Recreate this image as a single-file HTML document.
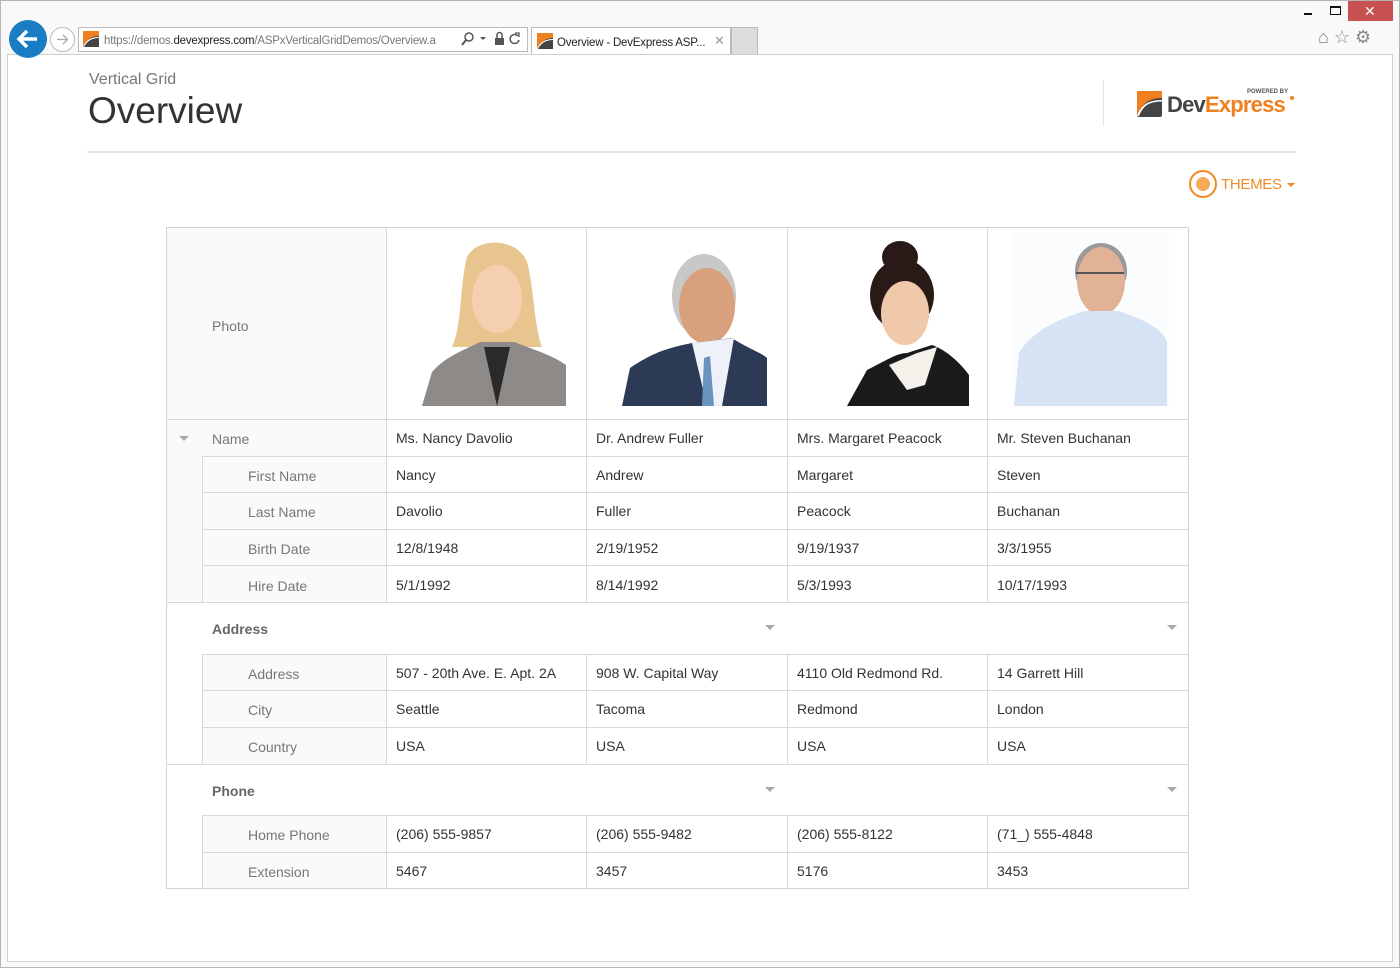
<!DOCTYPE html>
<html><head><meta charset="utf-8">
<style>
*{margin:0;padding:0;box-sizing:border-box}
body{width:1400px;height:968px;background:#fff;font-family:"Liberation Sans",sans-serif;position:relative;overflow:hidden}
.a{position:absolute}
.hl{position:absolute;height:1px;background:#d9d9d9}
.vl{position:absolute;width:1px;background:#d9d9d9}
.t{position:absolute;font-size:14px;color:#333;white-space:nowrap;line-height:16px}
.h{color:#777}
.b{font-weight:bold;color:#666}
.arr{position:absolute;width:0;height:0;border-left:6px solid transparent;border-right:6px solid transparent;border-top:6px solid #aaa}
</style></head><body>
<div class="a" style="left:0;top:0;width:1400px;height:968px;border:1px solid #b5b5b5;background:#f9f9f9"></div>
<div class="a" style="left:7px;top:54px;width:1386px;height:908px;background:#fff;border:1px solid #cfcfcf"></div>
<div class="a" style="left:9px;top:20px;width:38px;height:38px;border-radius:50%;background:#1a7dc4"></div>
<svg class="a" style="left:9px;top:20px" width="38" height="38"><path d="M28 19H11M18 11l-8 8 8 8" stroke="#fff" stroke-width="3.5" fill="none"/></svg>
<div class="a" style="left:50px;top:27px;width:25px;height:25px;border-radius:50%;border:1px solid #bbb;background:#fff"></div>
<svg class="a" style="left:50px;top:27px" width="25" height="25"><path d="M7 12.5h10M13 8l4.5 4.5L13 17" stroke="#aaa" stroke-width="1.3" fill="none"/></svg>
<div class="a" style="left:78px;top:27px;width:450px;height:25px;border:1px solid #bbb;background:#fff"></div>
<svg class="a" style="left:83px;top:31px" width="16" height="16"><rect width="16" height="16" fill="#444"/><path d="M0 0h16v5C9 5 4 8 0 16z" fill="#f07f1f"/><path d="M0 16C3 9 8 6 16 6v1C9 7 4 10 1 16z" fill="#fff"/></svg>
<div class="t" style="left:104px;top:33px;font-size:11.5px;color:#777;width:352px;overflow:hidden;letter-spacing:-0.2px">https://demos.<span style="color:#222">devexpress.com</span>/ASPxVerticalGridDemos/Overview.a</div>
<svg class="a" style="left:460px;top:31px" width="64" height="17"><circle cx="9" cy="6" r="4" stroke="#555" stroke-width="1.5" fill="none"/><path d="M6 9l-4 5" stroke="#555" stroke-width="2"/><path d="M20 6h6l-3 3z" fill="#555"/><rect x="35" y="7" width="9" height="7" fill="#555"/><path d="M37 7V4a2.5 2.5 0 0 1 5 0v3" stroke="#555" fill="none" stroke-width="1.5"/><path d="M58 5a4.5 4.5 0 1 0 1 4" stroke="#555" stroke-width="1.5" fill="none"/><path d="M55 2h4v4" stroke="#555" fill="none" stroke-width="1.3"/></svg>
<div class="a" style="left:531px;top:27px;width:200px;height:27px;border:1px solid #bbb;border-bottom:none;background:#fff"></div>
<svg class="a" style="left:537px;top:33px" width="16" height="16"><rect width="16" height="16" fill="#444"/><path d="M0 0h16v5C9 5 4 8 0 16z" fill="#f07f1f"/><path d="M0 16C3 9 8 6 16 6v1C9 7 4 10 1 16z" fill="#fff"/></svg>
<div class="t" style="left:557px;top:35px;font-size:11.5px;color:#222;letter-spacing:-0.2px">Overview - DevExpress ASP...</div>
<div class="t" style="left:714px;top:33px;font-size:13px;color:#999">✕</div>
<div class="a" style="left:731px;top:27px;width:27px;height:27px;background:#ddd;border:1px solid #bbb;border-bottom:none"></div>
<div class="a" style="left:1304px;top:13px;width:8px;height:2px;background:#111"></div>
<div class="a" style="left:1330px;top:6px;width:11px;height:9px;border:1px solid #111;border-top-width:2px"></div>
<div class="a" style="left:1348px;top:1px;width:45px;height:20px;background:#c75050"></div>
<div class="t" style="left:1364px;top:3px;color:#fff;font-size:14px">✕</div>
<div class="t" style="left:1318px;top:29px;font-size:18px;color:#888">⌂ ☆ ⚙</div>
<div class="t" style="left:89px;top:71px;font-size:16px;color:#777;line-height:18px">Vertical Grid</div>
<div class="t" style="left:88px;top:90px;font-size:37px;color:#333;line-height:42px">Overview</div>
<div class="vl" style="left:1103px;top:80px;height:46px;background:#e3e3e3"></div>
<svg class="a" style="left:1137px;top:91px" width="25" height="26"><rect width="25" height="26" rx="2" fill="#444"/><path d="M0 0h25v7C14 7 6 11 0 24z" fill="#f07f1f"/><path d="M0 25C4 14 11 9 25 9v1.5C12 10.5 6 15 2 25z" fill="#fff"/></svg>
<div class="t" style="left:1247px;top:89px;font-size:6px;font-weight:bold;color:#555;line-height:7px">POWERED BY</div>
<div class="t" style="left:1167px;top:93px;font-size:22px;font-weight:bold;line-height:24px;letter-spacing:-0.8px"><span style="color:#444">Dev</span><span style="color:#f07f1f">Express</span></div>
<div class="a" style="left:1290px;top:96px;width:4px;height:4px;border-radius:50%;background:#f07f1f"></div>
<div class="hl" style="left:87px;top:151px;width:1209px;height:2px;background:#e3e3e3"></div>
<div class="a" style="left:1189px;top:170px;width:28px;height:28px;border:2px solid #f08a24;border-radius:50%"></div>
<div class="a" style="left:1196px;top:177px;width:14px;height:14px;border-radius:50%;background:#f7a85a"></div>
<div class="t" style="left:1221px;top:177px;font-size:15px;color:#f08a24;letter-spacing:-0.3px">THEMES</div>
<div class="arr" style="left:1287px;top:183px;border-top-color:#f08a24;border-left-width:4px;border-right-width:4px;border-top-width:4px"></div>

<div class="a" style="left:166px;top:227px;width:220px;height:193px;background:#fafafa"></div>
<div class="a" style="left:166px;top:420px;width:220px;height:183px;background:#fafafa"></div>
<div class="a" style="left:202px;top:655px;width:184px;height:110px;background:#fafafa"></div>
<div class="a" style="left:202px;top:816px;width:184px;height:73px;background:#fafafa"></div>
<div class="a" style="left:166px;top:227px;width:1023px;height:662px;border:1px solid #d3d3d3"></div>
<div class="hl" style="left:166px;top:419px;width:1023px"></div>
<div class="hl" style="left:202px;top:456px;width:987px"></div>
<div class="hl" style="left:202px;top:492px;width:987px"></div>
<div class="hl" style="left:202px;top:529px;width:987px"></div>
<div class="hl" style="left:202px;top:565px;width:987px"></div>
<div class="hl" style="left:166px;top:602px;width:1023px"></div>
<div class="hl" style="left:202px;top:654px;width:987px"></div>
<div class="hl" style="left:202px;top:690px;width:987px"></div>
<div class="hl" style="left:202px;top:727px;width:987px"></div>
<div class="hl" style="left:166px;top:764px;width:1023px"></div>
<div class="hl" style="left:202px;top:815px;width:987px"></div>
<div class="hl" style="left:202px;top:852px;width:987px"></div>
<div class="vl" style="left:202px;top:456px;height:147px"></div>
<div class="vl" style="left:202px;top:654px;height:111px"></div>
<div class="vl" style="left:202px;top:815px;height:74px"></div>
<div class="vl" style="left:386px;top:227px;height:376px"></div>
<div class="vl" style="left:586px;top:227px;height:376px"></div>
<div class="vl" style="left:787px;top:227px;height:376px"></div>
<div class="vl" style="left:987px;top:227px;height:376px"></div>
<div class="vl" style="left:386px;top:654px;height:111px"></div>
<div class="vl" style="left:586px;top:654px;height:111px"></div>
<div class="vl" style="left:787px;top:654px;height:111px"></div>
<div class="vl" style="left:987px;top:654px;height:111px"></div>
<div class="vl" style="left:386px;top:815px;height:74px"></div>
<div class="vl" style="left:586px;top:815px;height:74px"></div>
<div class="vl" style="left:787px;top:815px;height:74px"></div>
<div class="vl" style="left:987px;top:815px;height:74px"></div>

<svg class="a" style="left:422px;top:237px" width="145" height="169">
<path d="M45 20C55 0 95 0 105 25C112 50 112 90 120 110L30 110C40 90 38 45 45 20z" fill="#e8c48e"/>
<ellipse cx="75" cy="62" rx="25" ry="34" fill="#f4cfb0"/>
<path d="M0 169L10 135C25 118 45 112 58 105L92 105C110 112 130 118 144 128L144 169z" fill="#8d8a87"/>
<path d="M62 110L75 169L88 110z" fill="#2a2a2a"/>
</svg>
<svg class="a" style="left:622px;top:238px" width="145" height="168">
<ellipse cx="82" cy="58" rx="32" ry="42" fill="#c8c8c8"/>
<ellipse cx="85" cy="68" rx="28" ry="38" fill="#d8a07c"/>
<path d="M0 168L8 130C30 115 45 110 70 105L110 100C125 110 140 115 145 120L145 168z" fill="#2d3a55"/>
<path d="M70 105L85 168L100 168L112 100z" fill="#eef2f8"/>
<path d="M82 120L88 118L92 168L80 168z" fill="#6b93c0"/>
</svg>
<svg class="a" style="left:847px;top:235px" width="122" height="171">
<ellipse cx="53" cy="22" rx="18" ry="16" fill="#2a1a17"/>
<ellipse cx="55" cy="60" rx="32" ry="36" fill="#2a1a17"/>
<ellipse cx="58" cy="78" rx="24" ry="32" fill="#f0c8aa"/>
<path d="M0 171L20 135C40 125 50 118 60 118L85 110C100 115 115 130 122 140L122 171z" fill="#1a1a1a"/>
<path d="M42 130L70 118L90 112L78 150L60 155z" fill="#f4f0ea"/>
</svg>
<svg class="a" style="left:1014px;top:233px" width="155" height="173">
<rect width="155" height="173" fill="#fafcfe"/>
<ellipse cx="87" cy="38" rx="26" ry="28" fill="#9a9a9a"/>
<ellipse cx="87" cy="48" rx="24" ry="34" fill="#e2b296"/>
<path d="M0 173L5 120C20 95 50 85 70 78L105 78C125 85 150 95 153 110L153 173z" fill="#d5e3f4"/>
<path d="M62 40h48" stroke="#555" stroke-width="2"/>
</svg>

<div class="t h" style="left:212px;top:318px">Photo</div>
<div class="arr" style="left:179px;top:436px;border-left-width:5px;border-right-width:5px;border-top-width:5px"></div>
<div class="t h" style="left:212px;top:431px">Name</div>
<div class="t h" style="left:248px;top:468px">First Name</div>
<div class="t h" style="left:248px;top:504px">Last Name</div>
<div class="t h" style="left:248px;top:541px">Birth Date</div>
<div class="t h" style="left:248px;top:578px">Hire Date</div>
<div class="t b" style="left:212px;top:621px">Address</div>
<div class="arr" style="left:765px;top:625px;border-left-width:5px;border-right-width:5px;border-top-width:5px"></div>
<div class="arr" style="left:1167px;top:625px;border-left-width:5px;border-right-width:5px;border-top-width:5px"></div>
<div class="t h" style="left:248px;top:666px">Address</div>
<div class="t h" style="left:248px;top:702px">City</div>
<div class="t h" style="left:248px;top:739px">Country</div>
<div class="t b" style="left:212px;top:783px">Phone</div>
<div class="arr" style="left:765px;top:787px;border-left-width:5px;border-right-width:5px;border-top-width:5px"></div>
<div class="arr" style="left:1167px;top:787px;border-left-width:5px;border-right-width:5px;border-top-width:5px"></div>
<div class="t h" style="left:248px;top:827px">Home Phone</div>
<div class="t h" style="left:248px;top:864px">Extension</div>

<div class="t" style="left:396px;top:430px">Ms. Nancy Davolio</div>
<div class="t" style="left:596px;top:430px">Dr. Andrew Fuller</div>
<div class="t" style="left:797px;top:430px">Mrs. Margaret Peacock</div>
<div class="t" style="left:997px;top:430px">Mr. Steven Buchanan</div>
<div class="t" style="left:396px;top:467px">Nancy</div>
<div class="t" style="left:596px;top:467px">Andrew</div>
<div class="t" style="left:797px;top:467px">Margaret</div>
<div class="t" style="left:997px;top:467px">Steven</div>
<div class="t" style="left:396px;top:503px">Davolio</div>
<div class="t" style="left:596px;top:503px">Fuller</div>
<div class="t" style="left:797px;top:503px">Peacock</div>
<div class="t" style="left:997px;top:503px">Buchanan</div>
<div class="t" style="left:396px;top:540px">12/8/1948</div>
<div class="t" style="left:596px;top:540px">2/19/1952</div>
<div class="t" style="left:797px;top:540px">9/19/1937</div>
<div class="t" style="left:997px;top:540px">3/3/1955</div>
<div class="t" style="left:396px;top:577px">5/1/1992</div>
<div class="t" style="left:596px;top:577px">8/14/1992</div>
<div class="t" style="left:797px;top:577px">5/3/1993</div>
<div class="t" style="left:997px;top:577px">10/17/1993</div>
<div class="t" style="left:396px;top:665px">507 - 20th Ave. E. Apt. 2A</div>
<div class="t" style="left:596px;top:665px">908 W. Capital Way</div>
<div class="t" style="left:797px;top:665px">4110 Old Redmond Rd.</div>
<div class="t" style="left:997px;top:665px">14 Garrett Hill</div>
<div class="t" style="left:396px;top:701px">Seattle</div>
<div class="t" style="left:596px;top:701px">Tacoma</div>
<div class="t" style="left:797px;top:701px">Redmond</div>
<div class="t" style="left:997px;top:701px">London</div>
<div class="t" style="left:396px;top:738px">USA</div>
<div class="t" style="left:596px;top:738px">USA</div>
<div class="t" style="left:797px;top:738px">USA</div>
<div class="t" style="left:997px;top:738px">USA</div>
<div class="t" style="left:396px;top:826px">(206) 555-9857</div>
<div class="t" style="left:596px;top:826px">(206) 555-9482</div>
<div class="t" style="left:797px;top:826px">(206) 555-8122</div>
<div class="t" style="left:997px;top:826px">(71_) 555-4848</div>
<div class="t" style="left:396px;top:863px">5467</div>
<div class="t" style="left:596px;top:863px">3457</div>
<div class="t" style="left:797px;top:863px">5176</div>
<div class="t" style="left:997px;top:863px">3453</div>
</body></html>
